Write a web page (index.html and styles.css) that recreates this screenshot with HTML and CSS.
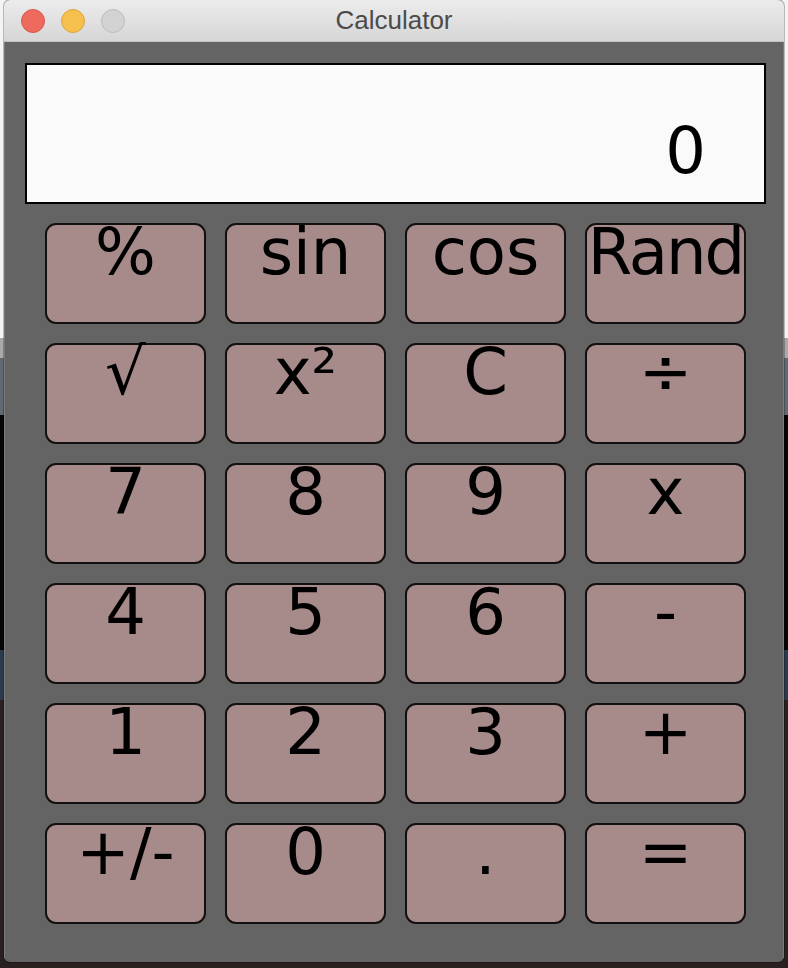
FILE: index.html
```html
<!DOCTYPE html>
<html lang="en">
<head>
<meta charset="utf-8">
<title>Calculator</title>
<link rel="stylesheet" href="styles.css">
</head>
<body>
<div class="window">
  <div class="titlebar">
    <div class="lights">
      <span class="light red"></span>
      <span class="light yellow"></span>
      <span class="light gray"></span>
    </div>
    <div class="title">Calculator</div>
  </div>
  <div class="content">
    <div class="display">0</div>
    <div class="keys">
      <button class="key">%</button>
      <button class="key">sin</button>
      <button class="key">cos</button>
      <button class="key tight">Rand</button>
      <button class="key">√</button>
      <button class="key">x²</button>
      <button class="key">C</button>
      <button class="key">÷</button>
      <button class="key">7</button>
      <button class="key">8</button>
      <button class="key">9</button>
      <button class="key">x</button>
      <button class="key">4</button>
      <button class="key">5</button>
      <button class="key">6</button>
      <button class="key">-</button>
      <button class="key">1</button>
      <button class="key">2</button>
      <button class="key">3</button>
      <button class="key">+</button>
      <button class="key">+/-</button>
      <button class="key">0</button>
      <button class="key">.</button>
      <button class="key">=</button>
    </div>
  </div>
</div>
</body>
</html>
```
FILE: styles.css
```css
html, body {
  margin: 0;
  padding: 0;
}
body {
  width: 788px;
  height: 968px;
  overflow: hidden;
  background: linear-gradient(to bottom,
    #f4f4f4 0, #f4f4f4 338px,
    #a9a9a9 338px, #a9a9a9 358px,
    #5f6a74 358px, #5f6a74 415px,
    #050505 415px, #050505 650px,
    #2b3b4d 650px, #2b3b4d 700px,
    #2a2020 700px);
  font-family: "DejaVu Sans", sans-serif;
}
.window {
  margin-left: 4px;
  width: 780px;
  height: 962px;
  display: flex;
  flex-direction: column;
  border-radius: 6px;
  overflow: hidden;
  background: #646464;
  box-shadow: 0 0 0 1px rgba(0,0,0,0.25);
}
.titlebar {
  height: 41px;
  flex: none;
  position: relative;
  display: flex;
  align-items: center;
  justify-content: center;
  background: linear-gradient(to bottom, #ececec, #d6d6d6);
  border-bottom: 1px solid #c4c4c4;
}
.lights {
  position: absolute;
  left: 17px;
  top: 9px;
  display: flex;
  gap: 16px;
}
.light {
  width: 22px;
  height: 22px;
  border-radius: 50%;
  border: 1px solid transparent;
}
.red { background: #ee6a5f; border-color: #d8574c; }
.yellow { background: #f6c04f; border-color: #dea639; }
.gray { background: #d2d2d2; border-color: #bdbdbd; }
.title {
  font-family: "Liberation Sans", Arial, sans-serif;
  font-size: 26px;
  color: #4b4b4b;
}
.content {
  flex: 1;
  padding: 21px 17px 0 20px;
  border-left: 1px solid #7a7a7a;
  border-right: 1px solid #7a7a7a;
}
.display {
  box-sizing: border-box;
  width: 741px;
  height: 141px;
  border: 2px solid #000;
  background: #fafafa;
  text-align: right;
  font-size: 64px;
  line-height: 64px;
  padding: 54px 58px 0 0;
  color: #000;
}
.keys {
  margin: 19px 0 0 20px;
  display: grid;
  grid-template-columns: repeat(4, 161px);
  grid-auto-rows: 101px;
  gap: 19px;
}
.key {
  box-sizing: border-box;
  margin: 0;
  padding: 0;
  border: 2px solid #141010;
  border-radius: 11px;
  background: #a78a8a;
  color: #000;
  font-family: "DejaVu Sans", sans-serif;
  font-size: 64px;
  line-height: 54px;
  display: flex;
  align-items: flex-start;
  justify-content: center;
  white-space: nowrap;
  overflow: visible;
}
.tight {
  letter-spacing: -2px;
}
```
